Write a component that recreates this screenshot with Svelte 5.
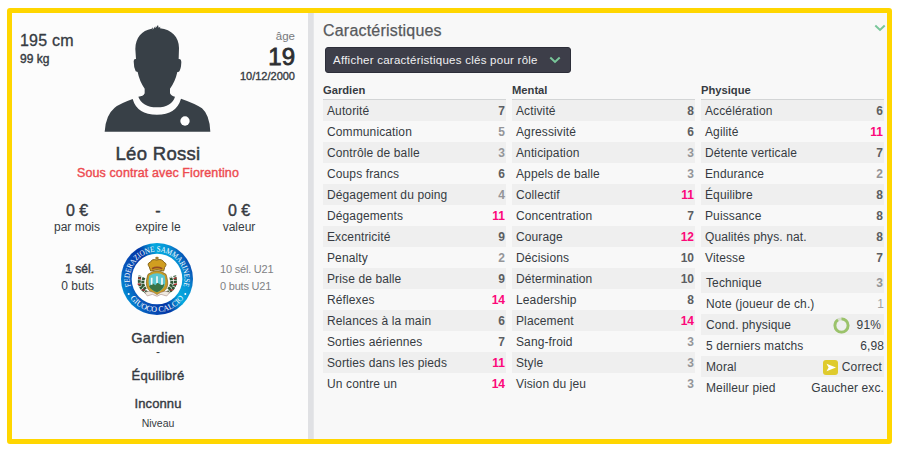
<script>
	const goalkeeping = [
		['Autorité', 7],
		['Communication', 5],
		['Contrôle de balle', 3],
		['Coups francs', 6],
		['Dégagement du poing', 4],
		['Dégagements', 11],
		['Excentricité', 9],
		['Penalty', 2],
		['Prise de balle', 9],
		['Réflexes', 14],
		['Relances à la main', 6],
		['Sorties aériennes', 7],
		['Sorties dans les pieds', 11],
		['Un contre un', 14]
	];
	const mental = [
		['Activité', 8],
		['Agressivité', 6],
		['Anticipation', 3],
		['Appels de balle', 3],
		['Collectif', 11],
		['Concentration', 7],
		['Courage', 12],
		['Décisions', 10],
		['Détermination', 10],
		['Leadership', 8],
		['Placement', 14],
		['Sang-froid', 3],
		['Style', 3],
		['Vision du jeu', 3]
	];
	const physical = [
		['Accélération', 6],
		['Agilité', 11],
		['Détente verticale', 7],
		['Endurance', 2],
		['Équilibre', 8],
		['Puissance', 8],
		['Qualités phys. nat.', 8],
		['Vitesse', 7]
	];
	const columns = [
		{ title: 'Gardien', rows: goalkeeping },
		{ title: 'Mental', rows: mental },
		{ title: 'Physique', rows: physical }
	];
	const contract = [
		['0 €', 'par mois'],
		['-', 'expire le'],
		['0 €', 'valeur']
	];

	function level(value) {
		if (value > 10) return 'high';
		return value > 5 ? 'mid' : 'low';
	}
</script>

{#snippet chevron()}
	<svg class="chevron" width="12" height="8" viewBox="0 0 12 8">
		<path d="M1.3 1.5 6 5.9l4.7-4.4" />
	</svg>
{/snippet}

<main class="card">
	<section class="profile">
		<div class="top">
			<div class="size">
				<div class="height">195 cm</div>
				<div class="weight">99 kg</div>
			</div>
			<svg class="portrait" width="107" height="108" viewBox="313 72 321 324">
				<path d="M475 75 477 83 482 80 481 85C516 89 538 111 538 144L537 177Q545 176 545 187 544 209 538 215L533 216Q527 244 511 266V280Q515 289 526 290 517 321 472 322 427 321 416 290 431 290 435 280V266Q419 243 414 216L408 214Q402 201 402 184 402 176 409 177L407 147C408 111 426 92 456 86L460 82 459 89 467 79V85Z" />
				<path d="M315 395Q318 345 345 323 360 311 399 297 412 344 472 344 530 344 544 296 590 312 607 325 630 345 632 395Z" />
				<circle cx="556" cy="363" r="14" />
			</svg>
			<div class="age">
				<div class="age-label">âge</div>
				<div class="age-value">19</div>
				<div class="birth">10/12/2000</div>
			</div>
		</div>

		<h1 class="name">Léo Rossi</h1>
		<div class="club">Sous contrat avec Fiorentino</div>

		<div class="contract">
			{#each contract as [value, label]}
				<div class="contract-item">
					<div class="contract-value">{value}</div>
					<div class="contract-label">{label}</div>
				</div>
			{/each}
		</div>

		<div class="national">
			<div class="caps">
				<div class="strong">1 sél.</div>
				<div>0 buts</div>
			</div>
			<svg class="crest" width="74" height="74" viewBox="0 0 222 222">
				<defs>
					<linearGradient id="ring" x1="0" y1="0.8" x2="1" y2="0.3">
						<stop offset="0" stop-color="#00a6df" />
						<stop offset="0.22" stop-color="#0757bb" />
						<stop offset="0.48" stop-color="#0335a5" />
						<stop offset="0.67" stop-color="#04a9df" />
						<stop offset="0.82" stop-color="#0794d5" />
						<stop offset="1" stop-color="#073caa" />
					</linearGradient>
					<path id="arc-top" d="M34 139A82 82 0 1 1 188 139" />
					<path id="arc-bottom" d="M18 145A99 99 0 0 0 204 145" />
				</defs>
				<circle cx="111" cy="111" r="108" fill="url(#ring)" />
				<circle cx="111" cy="111" r="76" fill="#fff" />
				<g class="crest-text">
					<text textLength="302" lengthAdjust="spacingAndGlyphs"><textPath href="#arc-top" startOffset="50%">FEDERAZIONE SAMMARINESE</textPath></text>
					<text><textPath href="#arc-bottom" startOffset="50%">GIUOCO CALCIO</textPath></text>
				</g>
				<circle cx="26" cy="156" r="3" fill="#fff" />
				<circle cx="196" cy="156" r="3" fill="#fff" />
				<g fill="none" stroke="#315733" stroke-width="9" stroke-dasharray="8 2">
					<path d="M82 152Q51 139 60 101M77 142Q62 125 73 105" />
					<path d="M140 152Q174 139 164 101M145 142Q162 125 151 105" />
				</g>
				<path d="M55 107l8 4M53 126l9 2M65 143l9 2M169 107l-8 4M171 126l-9 2M160 143l-9 2" stroke="#b52d31" stroke-width="4" />
				<path d="M84 97Q111 76 138 97C154 146 128 149 111 161 95 150 68 145 84 97Z" fill="#c69b25" stroke="#775b19" stroke-width="2" />
				<path d="M88 101Q111 87 134 101C142 135 125 144 111 151 95 144 80 135 88 101Z" fill="#59c5d0" />
				<path d="M87 133 98 124 106 130 113 122 123 129 133 126Q131 142 111 151 94 145 87 133Z" fill="#397345" />
				<path d="M95 107v21M111 103v20M126 107v21" stroke="#f7faf7" stroke-width="5" />
				<path d="M92 87 88 75Q79 64 92 60 95 50 110 54 126 49 132 61 143 65 134 76L131 87Q111 79 92 87Z" fill="#d19e20" stroke="#866318" stroke-width="3" />
				<path d="M111 53v-9M106 48h10" stroke="#9a731d" stroke-width="4" />
				<path d="M96 80Q111 72 127 80" fill="none" stroke="#954c25" stroke-width="5" />
				<path d="M74 151Q93 143 111 158 130 143 150 151L140 162 123 157 111 163 97 157 82 162Z" fill="#eee9df" stroke="#997571" stroke-width="1.5" />
			</svg>
			<div class="caps youth">
				<div>10 sél. U21</div>
				<div>0 buts U21</div>
			</div>
		</div>

		<div class="position">Gardien</div>
		<div class="dash">-</div>
		<div class="style-name">Équilibré</div>
		<div class="unknown">Inconnu</div>
		<div class="level-label">Niveau</div>
	</section>

	<section class="attributes">
		<header class="heading">
			<h2>Caractéristiques</h2>
			{@render chevron()}
		</header>
		<button class="role">
			<span class="role-text">Afficher caractéristiques clés pour rôle</span>
			{@render chevron()}
		</button>
		<div class="columns">
			{#each columns as column, i}
				<div class="column">
					<h3>{column.title}</h3>
					<div class="rows">
						{#each column.rows as [label, value]}
							<div class="row">
								<span>{label}</span>
								<b class={level(value)}>{value}</b>
							</div>
						{/each}
					</div>
					{#if i === 2}
						<div class="rows extra">
							<div class="row"><span>Technique</span><b class="low">3</b></div>
							<div class="row"><span>Note (joueur de ch.)</span><span class="faint">1</span></div>
							<div class="row">
								<span>Cond. physique</span>
								<span class="status condition">
									<svg width="17" height="17" viewBox="0 0 17 17">
										<circle cx="8.5" cy="8.5" r="6.6" fill="none" stroke="#d7ddce" stroke-width="2.8" />
										<circle cx="8.5" cy="8.5" r="6.6" fill="none" stroke="#9bc36b" stroke-width="2.8" pathLength="100" stroke-dasharray="91 9" transform="rotate(-90 8.5 8.5)" />
									</svg>
									91%
								</span>
							</div>
							<div class="row"><span>5 derniers matchs</span><span>6,98</span></div>
							<div class="row">
								<span>Moral</span>
								<span class="status morale">
									<svg width="15" height="15" viewBox="0 0 15 15">
										<rect width="15" height="15" rx="3" fill="#dfcb2d" />
										<path d="M3.5 3.7 13 7.5 3.5 11.3 5.6 7.5Z" fill="#fff" />
									</svg>
									Correct
								</span>
							</div>
							<div class="row"><span>Meilleur pied</span><span>Gaucher exc.</span></div>
						</div>
					{/if}
				</div>
			{/each}
		</div>
	</section>
</main>

<style>
	:global(body) {
		background: #fff;
	}

	.card {
		display: flex;
		box-sizing: border-box;
		width: 885px;
		height: 436px;
		margin: 8px 0 0 7px;
		border: 5px solid #ffd600;
		border-radius: 3px;
		background: #e0e1e4;
		font-family: "Liberation Sans", Arial, sans-serif;
		color: #363b42;
	}

	.profile {
		box-sizing: border-box;
		flex-shrink: 0;
		width: 296px;
		padding-right: 4px;
		background: #fcfcfc;
		text-align: center;
	}

	.top {
		display: grid;
		grid-template-columns: 92px 107px 84px;
		height: 130px;
	}

	.size {
		padding: 18px 0 0 8px;
		text-align: left;
		white-space: nowrap;
	}

	.height {
		font-size: 16px;
		line-height: 19px;
		letter-spacing: 0.2px;
		-webkit-text-stroke: 0.3px;
	}

	.weight {
		font-size: 12px;
		line-height: 18px;
		-webkit-text-stroke: 0.4px;
	}

	.portrait {
		margin-top: 11px;
		fill: #384047;
	}

	.portrait circle {
		fill: #fff;
	}

	.age {
		padding-top: 16px;
		text-align: right;
	}

	.age-label {
		font-size: 11.5px;
		line-height: 14px;
		color: #77797c;
	}

	.age-value {
		font-size: 24px;
		line-height: 27px;
		color: #2d2e31;
		-webkit-text-stroke: 0.8px;
	}

	.birth {
		font-size: 11px;
		line-height: 12px;
		-webkit-text-stroke: 0.35px;
	}

	.name {
		margin: 0;
		font-size: 18.5px;
		font-weight: 400;
		line-height: 22px;
		letter-spacing: 0.3px;
		-webkit-text-stroke: 0.5px;
	}

	.club {
		font-size: 12.5px;
		line-height: 16px;
		letter-spacing: 0.1px;
		color: #ed4b50;
		-webkit-text-stroke: 0.4px;
	}

	.contract {
		display: grid;
		grid-template-columns: repeat(3, 81px);
		justify-content: center;
		margin-top: 21px;
	}

	.contract-value {
		font-size: 16px;
		line-height: 18px;
		-webkit-text-stroke: 0.4px;
	}

	.contract-label {
		font-size: 12px;
		line-height: 14px;
	}

	.national {
		display: grid;
		grid-template-columns: 81px 74px 81px;
		justify-content: center;
		column-gap: 26px;
		margin: 8px 0 0 -2px;
		white-space: nowrap;
	}

	.caps {
		padding-top: 19px;
		font-size: 12px;
		line-height: 17px;
		text-align: right;
	}

	.strong {
		-webkit-text-stroke: 0.45px;
	}

	.youth {
		font-size: 11px;
		letter-spacing: -0.2px;
		text-align: left;
		color: #808184;
	}

	.crest-text {
		fill: #fff;
		font: 24px "Liberation Serif", serif;
		text-anchor: middle;
	}

	.position {
		margin-top: 13px;
		font-size: 14.5px;
		line-height: 18px;
		letter-spacing: 0.25px;
		-webkit-text-stroke: 0.4px;
	}

	.dash {
		font-size: 12px;
		line-height: 11px;
	}

	.style-name {
		margin-top: 10px;
		font-size: 13px;
		line-height: 16px;
		letter-spacing: 0.25px;
		-webkit-text-stroke: 0.4px;
	}

	.unknown {
		margin-top: 12px;
		font-size: 13px;
		line-height: 16px;
		letter-spacing: 0.1px;
		-webkit-text-stroke: 0.4px;
	}

	.level-label {
		margin-top: 4px;
		font-size: 10.5px;
		line-height: 14px;
	}

	.attributes {
		flex: 1;
		box-sizing: border-box;
		margin-left: 5px;
		padding: 0 3px 0 9px;
		border-left: 1px solid #e6e7e9;
		background: #f8f8f8;
	}

	.heading {
		display: flex;
		justify-content: space-between;
		height: 34px;
	}

	.heading .chevron {
		margin: 11px -2px 0 0;
	}

	h2 {
		margin: 7px 0 0;
		font-size: 16px;
		font-weight: 400;
		line-height: 21px;
		letter-spacing: 0.2px;
		color: #57595c;
		-webkit-text-stroke: 0.25px;
	}

	.chevron {
		flex-shrink: 0;
		fill: none;
		stroke: #79c69a;
		stroke-width: 2;
	}

	.role {
		display: flex;
		align-items: center;
		justify-content: space-between;
		box-sizing: border-box;
		width: 246px;
		height: 26px;
		margin-left: 2px;
		padding: 0 9px 0 7px;
		border: 1px solid #2c2e39;
		border-radius: 3px;
		background: #3d3e49;
		font-family: inherit;
		font-size: 11.5px;
		letter-spacing: 0.25px;
		white-space: nowrap;
		color: #f0f0f2;
	}

	.columns {
		display: grid;
		grid-template-columns: repeat(3, 183px);
		column-gap: 6px;
		margin-top: 9px;
	}

	h3 {
		box-sizing: border-box;
		height: 18px;
		margin: 0;
		border-bottom: 1px solid #d3d5d6;
		font-size: 11.2px;
		line-height: 16px;
	}

	.rows {
		font-size: 12px;
		letter-spacing: 0.12px;
	}

	.row {
		display: flex;
		align-items: center;
		justify-content: space-between;
		box-sizing: border-box;
		height: 21px;
		padding: 1px 1px 0 4px;
		white-space: nowrap;
	}

	.row b {
		letter-spacing: 0;
	}

	.row:nth-child(odd) {
		background: #efefef;
	}

	.extra {
		margin-top: 4px;
	}

	.extra .row {
		padding: 1px 0 0 5px;
	}

	.extra .row b {
		padding-right: 1px;
	}

	.high {
		color: #fc0879;
	}

	.mid {
		color: #5c5e62;
	}

	.low {
		color: #949598;
	}

	.faint {
		color: #a2a3a5;
	}

	.status {
		display: flex;
		align-items: center;
	}

	.condition {
		gap: 7px;
		padding-right: 3px;
	}

	.morale {
		gap: 4px;
		padding-right: 2px;
	}
</style>
